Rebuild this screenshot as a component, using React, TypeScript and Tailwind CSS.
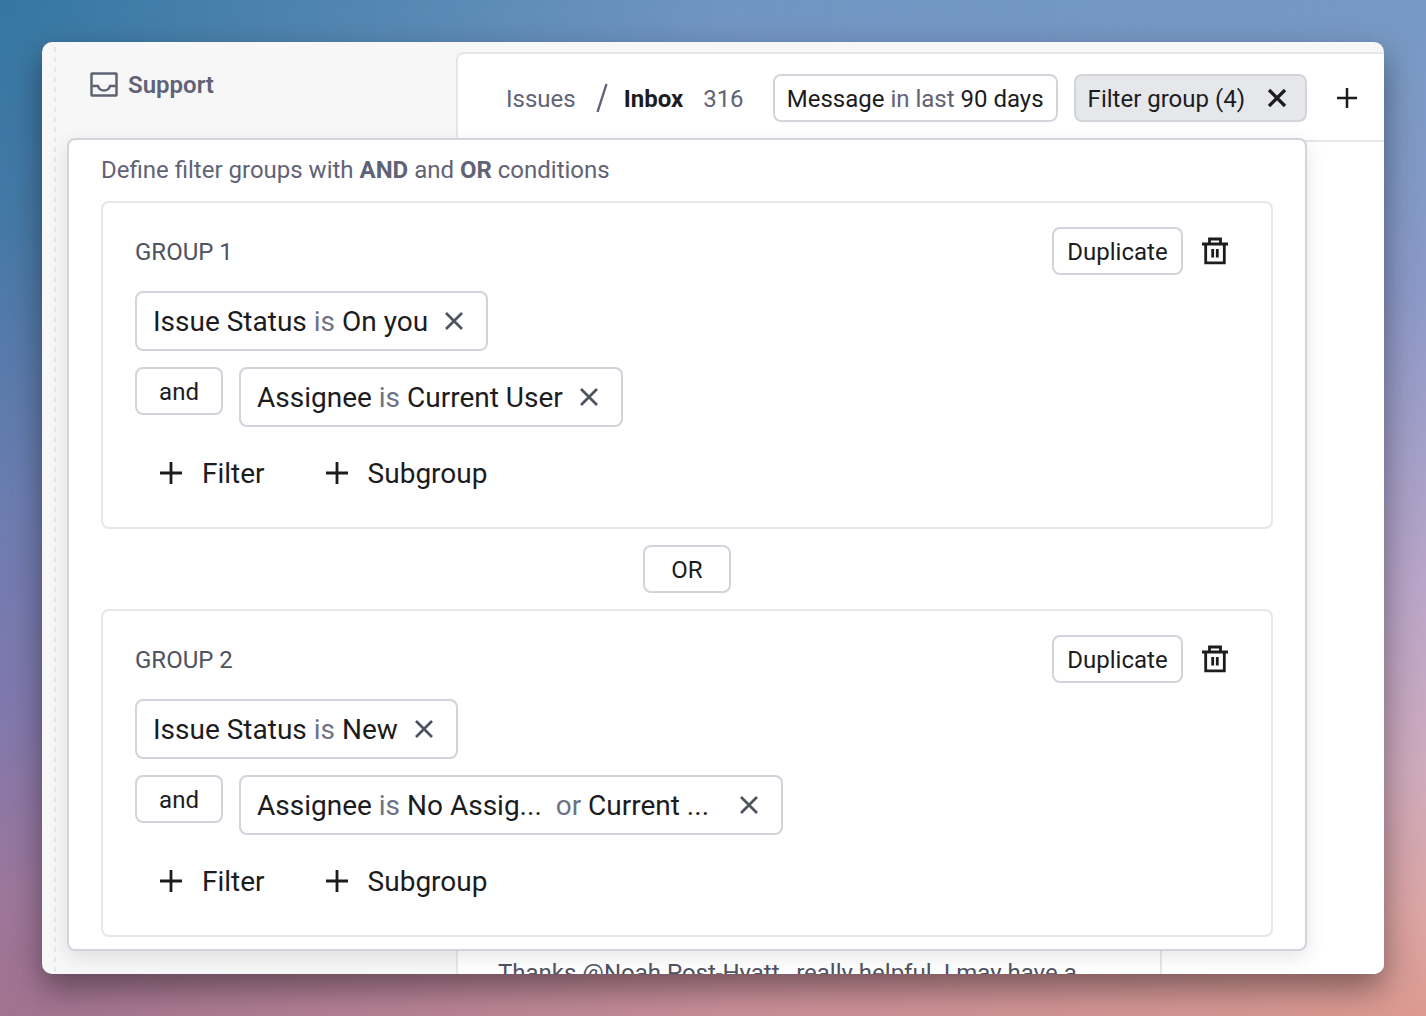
import type { ReactNode } from "react";

const outline = "rounded-lg border-2 border-[#d3d4db] bg-white";

function InboxIcon() {
  return (
    <svg width="28" height="26" viewBox="0 0 28 26" fill="none" stroke="currentColor" strokeWidth="2.5" aria-hidden="true">
      <rect x="1.5" y="1.5" width="25" height="22" rx="0.5" />
      <path d="M1.500 14H8c.8 2.700 3 4.500 6 4.500s5.200-1.800 6-4.500h6.500" />
    </svg>
  );
}

function CloseIcon({ bold = false }: { bold?: boolean }) {
  return (
    <svg width="20" height="20" viewBox="0 0 20 20" fill="none" stroke="currentColor" strokeWidth={bold ? 3.2 : 2.7} aria-hidden="true">
      <path d="M2 2l16 16M18 2L2 18" />
    </svg>
  );
}

function PlusIcon({ small = false }: { small?: boolean }) {
  const size = small ? 20 : 22;
  return (
    <svg width={size} height={size} viewBox="0 0 22 22" fill="none" stroke="currentColor" strokeWidth="2.8" aria-hidden="true">
      <path d="M11 0v22M0 11h22" />
    </svg>
  );
}

function TrashIcon() {
  return (
    <svg width="28" height="28" viewBox="0 0 28 28" fill="none" stroke="currentColor" strokeWidth="2.800" aria-hidden="true">
      <path d="M1 7h26M8.500 7V2h11v5M4.700 7v18.800h18.600V7" />
      <path d="M11.700 12v8.500M16.300 12v8.500" />
    </svg>
  );
}

function Chip({ label, children }: { label: string; children: ReactNode }) {
  return (
    <div className={`${outline} flex h-[60px] items-center px-4 text-[28px]`}>
      <span className="pt-0.5 whitespace-pre">{children}</span>
      <button type="button" aria-label={`Remove ${label}`} className="ml-2.5 flex size-8 items-center justify-center text-[#4f525f]">
        <CloseIcon />
      </button>
    </div>
  );
}

function Muted({ children }: { children: ReactNode }) {
  return <span className="text-[#6f7285]">{children}</span>;
}

function Group({ name, first, second }: { name: string; first: ReactNode; second: ReactNode }) {
  return (
    <section className="flex flex-col items-start gap-4 rounded-lg border-2 border-[#e6e7ec] px-8 py-6">
      <div className="flex h-12 w-full items-center">
        <h2 className="pt-0.5 text-2xl text-[#4f525f]">{name}</h2>
        <button type="button" className={`${outline} ml-auto h-12 w-[131px] pt-0.5 text-2xl`}>Duplicate</button>
        <button type="button" aria-label={`Delete ${name}`} className="ml-2 flex size-12 items-center justify-center">
          <TrashIcon />
        </button>
      </div>
      {first}
      <div className="flex items-start gap-4">
        <button type="button" className={`${outline} h-12 w-[88px] pt-0.5 text-2xl`}>and</button>
        {second}
      </div>
      <div className="flex h-[60px] items-center gap-[61px] pl-[25px] text-[28px]">
        <button type="button" className="flex items-center gap-5"><PlusIcon /><span className="pt-0.5">Filter</span></button>
        <button type="button" className="flex items-center gap-5"><PlusIcon /><span className="pt-0.5">Subgroup</span></button>
      </div>
    </section>
  );
}

export default function App() {
  return (
    <div className="relative isolate h-screen overflow-hidden bg-[linear-gradient(to_bottom,#759ac4_0%,#8b99c8_28%,#bda6c8_60%,#cfaabc_76%,#dca5a3_90%,#dc9a90_100%)] p-[42px] font-['Roboto',sans-serif] text-[#1c1c1e]">
      <div className="absolute inset-0 -z-10 bg-[linear-gradient(to_bottom,#7095c2_0%,#8b99c8_40%,#b788a4_80%,#c98e98_100%)] mask-r-from-50% mask-r-to-100%" />
      <div className="absolute inset-0 -z-10 bg-[linear-gradient(to_bottom,#3477a1_0%,#4478a6_22%,#6c7cb0_50%,#8078ad_70%,#9c769b_88%,#a1728f_100%)] mask-r-from-0% mask-r-to-50%" />
      <div className="relative flex h-full overflow-hidden rounded-[10px] bg-[#f7f7f7] shadow-[0_14px_32px_rgba(0,0,0,0.42)]">
        <aside className="flex w-[414px] shrink-0 pl-3">
          <div className="mt-[5px] w-0.5 bg-[repeating-linear-gradient(to_bottom,#e6e7ec_0px,#e6e7ec_5px,transparent_5px,transparent_10px)]" />
          <a href="#support" className="mt-[27px] ml-[34px] flex h-8 items-center gap-2.5 text-2xl font-semibold text-[#5f6375]">
            <InboxIcon />
            Support
          </a>
        </aside>
        <main className="mt-2.5 flex min-w-0 flex-1 flex-col rounded-tl-lg border-t-2 border-l-2 border-[#e6e7ec] bg-white">
          <header className="flex h-[88px] shrink-0 items-center border-b-2 border-[#e6e7ec] pt-0.5 pr-[13px] pl-12 text-2xl whitespace-nowrap">
            <a href="#issues" className="pt-0.5 text-[#5f6375]">Issues</a>
            <svg className="mr-4 ml-5" width="12" height="30" viewBox="0 0 12 30" fill="none" stroke="#5f6375" strokeWidth="2.400" aria-hidden="true">
              <path d="M10.500 1L1.500 29" />
            </svg>
            <a href="#inbox" className="pt-0.5 font-bold">Inbox</a>
            <span className="ml-5 pt-0.5 text-[#5f6375]">316</span>
            <button type="button" className={`${outline} ml-auto h-12 px-3 pt-0.5`}>
              Message <span className="text-[#5f6375]">in last</span> 90 days
            </button>
            <div className="ml-4 flex h-12 items-center rounded-lg border-2 border-[#d3d4db] bg-[#e6e7eb] px-3">
              <button type="button" className="pt-0.5">Filter group (4)</button>
              <button type="button" aria-label="Remove filter group" className="ml-4 flex size-8 items-center justify-center">
                <CloseIcon bold />
              </button>
            </div>
            <button type="button" aria-label="Add filter" className="ml-4 flex size-12 items-center justify-center">
              <PlusIcon small />
            </button>
          </header>
          <div className="min-h-0 w-[704px] flex-1 border-r-2 border-[#e6e7ec] pt-[815px] pl-10">
            <p className="text-2xl whitespace-nowrap text-[#4f525f]">Thanks @Noah Post-Hyatt , really helpful. I may have a</p>
          </div>
        </main>
        <div role="dialog" aria-label="Filter groups" className="absolute top-24 right-[77px] left-[25px] rounded-lg border-2 border-[#d3d4db] bg-white px-8 pt-3.5 pb-3 shadow-[0_6px_20px_rgba(0,0,0,0.1)]">
          <p className="mb-[15px] text-2xl text-[#5f6375]">
            Define filter groups with <strong className="font-bold">AND</strong> and <strong className="font-bold">OR</strong> conditions
          </p>
          <div className="flex flex-col gap-4">
            <Group
              name="GROUP 1"
              first={<Chip label="Issue Status filter">Issue Status <Muted>is</Muted> On you</Chip>}
              second={<Chip label="Assignee filter">Assignee <Muted>is</Muted> Current User</Chip>}
            />
            <button type="button" className={`${outline} h-12 w-[88px] self-center pt-0.5 text-2xl`}>OR</button>
            <Group
              name="GROUP 2"
              first={<Chip label="Issue Status filter">Issue Status <Muted>is</Muted> New</Chip>}
              second={
                <Chip label="Assignee filter">
                  Assignee <Muted>is</Muted> No Assig...{"  "}<Muted>or</Muted> Current ...{"  "}
                </Chip>
              }
            />
          </div>
        </div>
      </div>
    </div>
  );
}
